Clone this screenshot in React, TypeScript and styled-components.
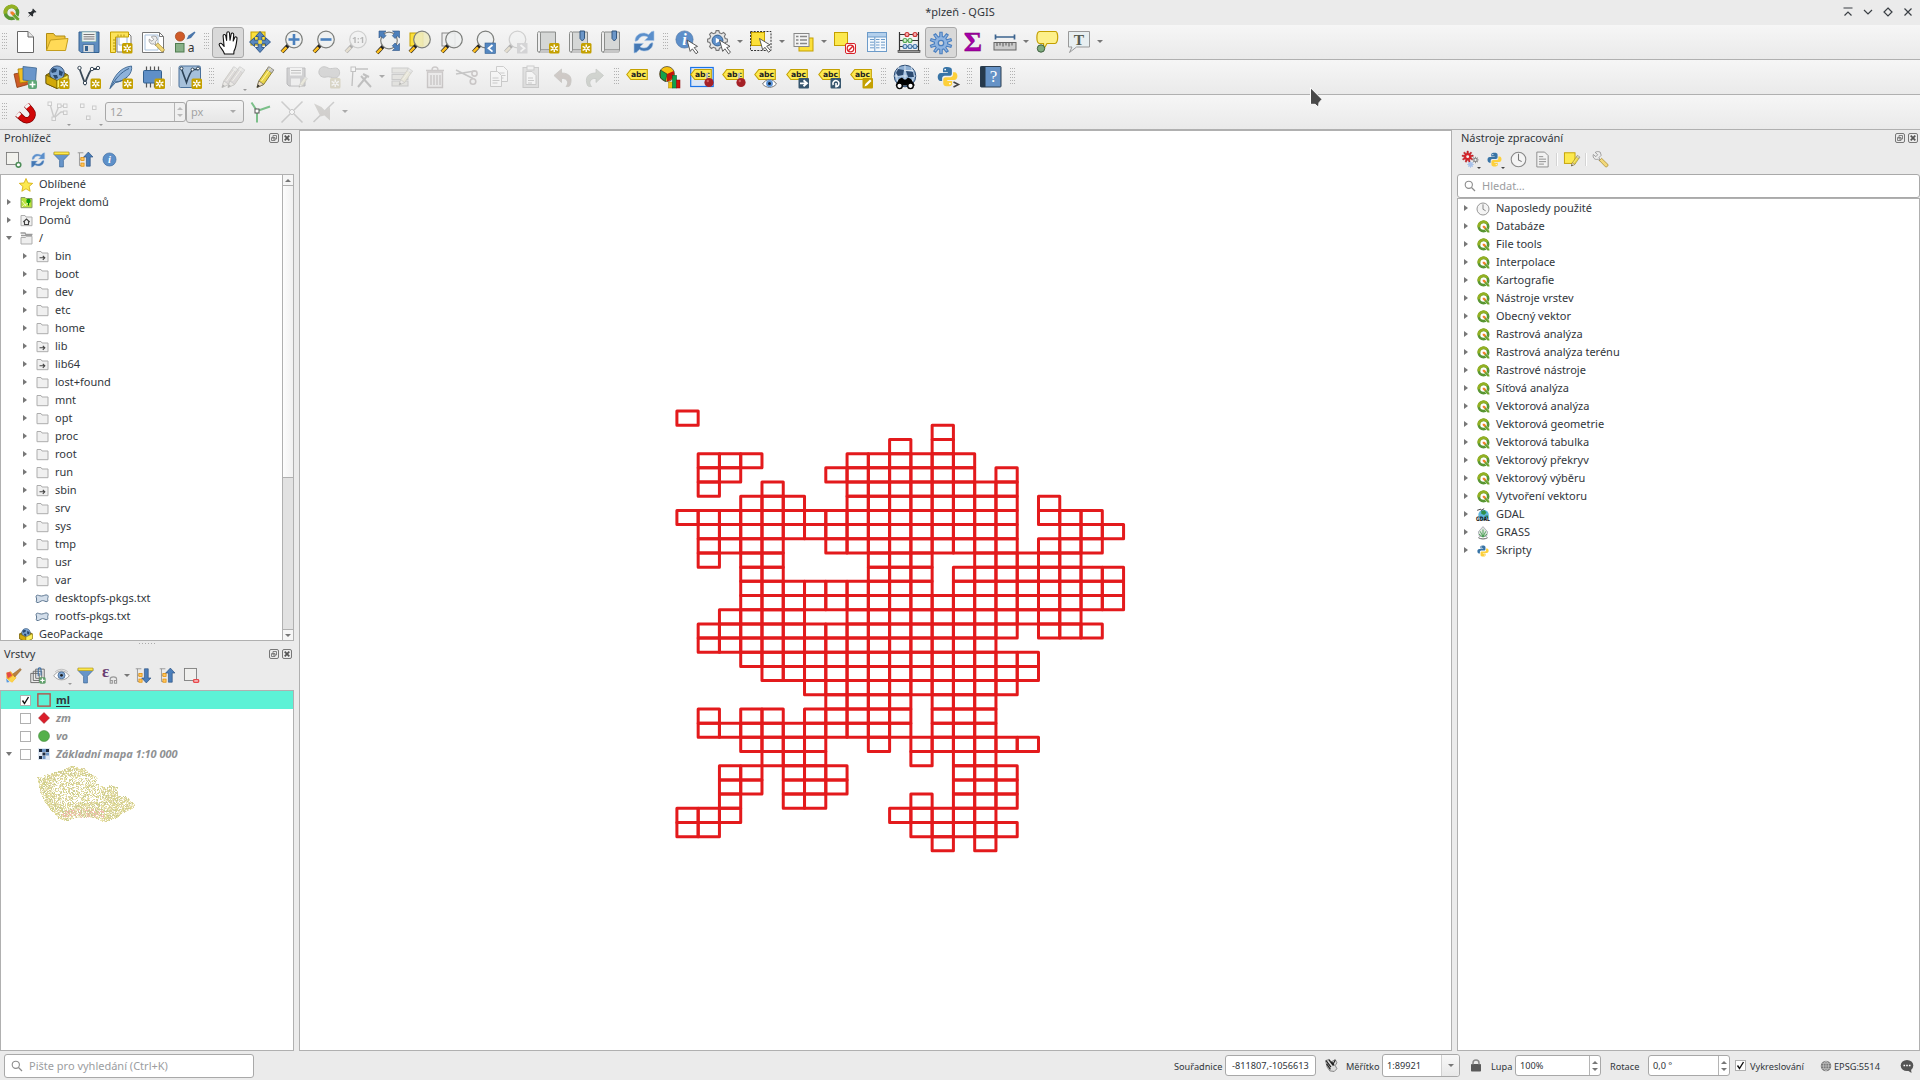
import React from "react";
import styled, { createGlobalStyle, css } from "styled-components";

/* ---------- theme values ---------- */
const bg = "#ebebeb";
const line = "#b0b0b0";
const ink = "#31363b";
const font = '"Noto Sans", "DejaVu Sans", sans-serif';

const GlobalStyle = createGlobalStyle`
  html, body { margin: 0; padding: 0; background: ${bg}; }
  body { font-family: ${font}; font-size: 11px; color: ${ink}; overflow: hidden; }
  *, *::before, *::after { box-sizing: border-box; }
  svg { display: block; flex: none; overflow: visible; }
`;

/* ---------- layout ---------- */
const Window = styled.div`
  position: relative;
  width: 1920px;
  height: 1080px;
  display: flex;
  flex-direction: column;
  background: ${bg};
  overflow: hidden;
`;
const TitleBar = styled.header`
  height: 25px;
  display: grid;
  grid-template-columns: 1fr auto 1fr;
  align-items: center;
  line-height: 24px;
`;
const TitleLeft = styled.div`
  display: flex;
  align-items: center;
  gap: 7px;
  padding-left: 3px;
`;
const TitleText = styled.div`
  padding-bottom: 1px;
`;
const TitleRight = styled.div`
  display: flex;
  justify-content: flex-end;
  gap: 8px;
  padding: 0 6px 1px 0;
`;
const Toolbar = styled.div`
  height: 35px;
  display: flex;
  align-items: stretch;
  padding-bottom: 1px;
  background: linear-gradient(#f6f6f6, #eaeaea);
  border-bottom: 1px solid ${line};
`;
const Grip = styled.div<{ $first?: boolean }>`
  flex: none;
  width: ${(p) => (p.$first ? 9 : 11)}px;
  display: flex;
  align-items: center;
  justify-content: center;
  &::after {
    content: "";
    width: 5px;
    height: 17px;
    background-image: radial-gradient(circle at 0.5px 0.5px, #b2b2b2 0.6px, transparent 0.9px);
    background-size: 2px 3px;
  }
`;
const ToolButton = styled.div<{ $pressed?: boolean; $off?: boolean }>`
  position: relative;
  flex: none;
  width: 32px;
  display: flex;
  align-items: center;
  justify-content: center;
  & > svg { opacity: ${(p) => (p.$off ? 0.3 : 1)}; ${(p) => p.$off && "filter: grayscale(0.7);"} }
  ${(p) =>
    p.$pressed &&
    css`
      background: #d9d9d9;
      border: 1px solid #a9a9a9;
      border-radius: 3px;
      margin: 2px 0 0;
    `}
`;
const MenuMark = styled.span<{ $color?: string }>`
  position: absolute;
  right: 2px;
  bottom: 2px;
  border: 2px solid transparent;
  border-top-color: ${(p) => p.$color || "#999"};
  border-bottom: 0;
`;
const DropArrow = styled.div<{ $w?: number; $off?: boolean }>`
  flex: none;
  width: ${(p) => p.$w || 10}px;
  display: flex;
  align-items: center;
  justify-content: center;
  &::after {
    content: "";
    border: 3px solid transparent;
    border-top-color: ${(p) => (p.$off ? "#aaa" : "#777")};
    border-bottom: 0;
  }
`;
const Separator = styled.div<{ $w?: number }>`
  flex: none;
  width: ${(p) => p.$w || 5}px;
  align-self: stretch;
  display: flex;
  justify-content: center;
  align-items: center;
  &::after { content: ""; width: 1px; height: 55%; background: #fff; box-shadow: -1px 0 0 #d4d4d4; }
`;
const Field = styled.div<{ $w: number; $h: number; $off?: boolean }>`
  flex: none;
  width: ${(p) => p.$w}px;
  height: ${(p) => p.$h}px;
  display: flex;
  align-items: center;
  background: ${(p) => (p.$off ? "#f0f0f0" : "#fff")};
  color: ${(p) => (p.$off ? "#a3a3a3" : ink)};
  border: 1px solid #a8a8a8;
  border-radius: 3px;
  align-self: center;
`;
const FieldText = styled.span<{ $pl?: number }>`
  flex: 1;
  padding-left: ${(p) => p.$pl ?? 4}px;
  white-space: nowrap;
`;
const Steps = styled.span<{ $off?: boolean }>`
  width: 11px;
  align-self: stretch;
  border-left: 1px solid #b5b5b5;
  display: flex;
  flex-direction: column;
  align-items: center;
  justify-content: center;
  gap: 4px;
  &::before, &::after { content: ""; border: 3px solid transparent; }
  &::before { border-bottom-color: ${(p) => (p.$off ? "#bbb" : "#777")}; border-top: 0; }
  &::after { border-top-color: ${(p) => (p.$off ? "#bbb" : "#777")}; border-bottom: 0; }
`;
const ComboButton = styled(Field)`
  background: linear-gradient(#f4f4f4, #e6e6e6);
`;
const ComboEnd = styled.span`
  width: 18px;
  align-self: stretch;
  display: flex;
  border-left: 1px solid #d0d0d0;
  background: linear-gradient(#f8f8f8, #e8e8e8);
  border-radius: 0 3px 3px 0;
  justify-content: center;
`;

const Main = styled.main`
  height: 921px;
  display: flex;
`;
const LeftColumn = styled.aside`
  width: 299px;
  display: flex;
  flex-direction: column;
  padding-right: 5px;
`;
const RightColumn = styled.aside`
  flex: 1;
  display: flex;
  flex-direction: column;
  padding-left: 5px;
`;
const Canvas = styled.section`
  width: 1153px;
  background: #fff;
  border: 1px solid ${line};
`;
const Dock = styled.section<{ $h?: number }>`
  display: flex;
  flex-direction: column;
  min-height: 0;
  ${(p) => (p.$h ? `height: ${p.$h}px; flex: none;` : "flex: 1;")}
`;
const DockTitle = styled.div`
  height: 17px;
  padding: 0 2px 1px 4px;
  display: flex;
  align-items: center;
  line-height: 16px;
`;
const DockName = styled.span`
  flex: 1;
`;
const DockButtons = styled.span`
  display: flex;
  gap: 3px;
`;
const DockBar = styled.div`
  height: 27px;
  display: flex;
  align-items: center;
  padding: 0 0 2px 1.5px;
`;
const SmallButton = styled.span`
  position: relative;
  width: 24px;
  height: 22px;
  display: flex;
  align-items: center;
  justify-content: center;
`;
const SplitDots = styled.div`
  height: 5px;
  display: flex;
  justify-content: center;
  align-items: center;
  &::after {
    content: "";
    width: 17px;
    height: 1px;
    background: repeating-linear-gradient(90deg, #aaa 0 1px, transparent 1px 3px);
  }
`;
const TreeBox = styled.div`
  flex: 1;
  min-height: 0;
  display: flex;
  background: #fff;
  border: 1px solid ${line};
  overflow: hidden;
`;
const TreeList = styled.div`
  flex: 1;
  overflow: hidden;
`;
const TreeRow = styled.div<{ $depth?: number; $selected?: boolean }>`
  height: 18px;
  display: flex;
  align-items: center;
  padding-left: ${(p) => 2 + (p.$depth || 0) * 16}px;
  line-height: 18px;
  white-space: nowrap;
  background: ${(p) => (p.$selected ? "#5cf2d6" : "transparent")};
`;
const Twisty = styled.span<{ $state?: "open" | "closed" | "none"; $wide?: boolean }>`
  flex: none;
  width: 12px;
  margin-right: ${(p) => (p.$wide ? 5 : 0)}px;
  display: flex;
  justify-content: center;
  &::after {
    content: "";
    ${(p) => p.$state === "closed" && "border: 3px solid transparent; border-left: 4px solid #777; border-right: 0;"}
    ${(p) => p.$state === "open" && "border: 3px solid transparent; border-top: 4px solid #777; border-bottom: 0;"}
  }
`;
const RowIcon = styled.span`
  flex: none;
  width: 14px;
  margin: 0 6px 0 4px;
  padding-top: 1px;
  display: flex;
  justify-content: center;
`;
const Scrollbar = styled.div`
  width: 11px;
  display: flex;
  flex-direction: column;
  background: #e2e2e2;
  border-left: 1px solid ${line};
`;
const ScrollEnd = styled.div<{ $up?: boolean }>`
  height: 11px;
  background: #f6f6f6;
  display: flex;
  align-items: center;
  justify-content: center;
  border-${(p) => (p.$up ? "bottom" : "top")}: 1px solid ${line};
  &::after {
    content: "";
    border: 3px solid transparent;
    border-${(p) => (p.$up ? "bottom" : "top")}-color: #777;
    border-${(p) => (p.$up ? "top" : "bottom")}: 0;
  }
`;
const ScrollThumb = styled.div`
  height: 292px;
  background: linear-gradient(90deg, #fdfdfd, #f1f1f1);
  border-bottom: 1px solid ${line};
  margin-bottom: auto;
`;
const Check = styled.span`
  flex: none;
  width: 11px;
  height: 11px;
  display: flex;
  align-items: center;
  justify-content: center;
  background: #fff;
  border: 1px solid #b0b0b0;
`;
const LayerName = styled.span<{ $active?: boolean }>`
  font-weight: 700;
  letter-spacing: -0.05px;
  ${(p) =>
    p.$active
      ? `text-decoration: underline; text-underline-offset: 2px;`
      : `font-style: italic; color: #8f9193;`}
`;
const LayerSymbol = styled.span`
  flex: none;
  width: 14px;
  margin: 0 5px 0 6px;
  display: flex;
  justify-content: center;
`;
const Thumb = styled.div`
  padding: 1px 0 0 35px;
`;
const SearchBox = styled.div<{ $w?: number }>`
  ${(p) => (p.$w ? `width: ${p.$w}px;` : "")}
  height: 24px;
  flex: none;
  display: flex;
  align-items: center;
  gap: 6px;
  padding: 0 0 ${(p) => (p.$w ? 0 : 1)}px 6px;
  background: #fff;
  color: #9b9d9f;
  font-size: 11px;
  border: 1px solid #a9a9a9;
  border-radius: 3px;
`;
const StatusBar = styled.footer`
  height: 29px;
  display: flex;
  align-items: center;
  padding: 0 6px 0 4px;
  font-size: 9.2px;
`;
const StatusText = styled.span<{ $w: number; $pl?: number }>`
  flex: none;
  width: ${(p) => p.$w}px;
  padding: 1px 0 0 ${(p) => p.$pl || 0}px;
  white-space: nowrap;
`;
const StatusIcon = styled.span<{ $w: number }>`
  flex: none;
  width: ${(p) => p.$w}px;
  display: flex;
  justify-content: center;
`;
const Spacer = styled.span`
  flex: 1;
`;
const Pointer = styled.div`
  position: absolute;
  left: 1309px;
  top: 86px;
`;

/* ---------- drawing helpers ---------- */
type Kids = { children?: React.ReactNode };
const I = ({ children, s = 24 }: Kids & { s?: number }) => (
  <svg width={s} height={s} viewBox="0 0 24 24" fill="none">
    {children}
  </svg>
);

/* golden badge marking the "new ..." actions */
const Badge = ({ x = 13, y = 13 }: { x?: number; y?: number }) => (
  <g transform={`translate(${x} ${y})`}>
    <rect width="10.5" height="10.5" rx="1.5" fill="#c4a000" />
    <path d="M5.25 1.4v7.7M1.6 3.3l7.3 4M8.9 3.3l-7.3 4" stroke="#fff" strokeWidth="1.4" />
    <circle cx="5.25" cy="5.25" r="1" fill="#c4a000" />
  </g>
);
const Lens = ({ cx = 14, cy = 9.5, fill = "#eef0f0" }: { cx?: number; cy?: number; fill?: string }) => (
  <g>
    <path d={`M${cx - 5.5} ${cy + 5.5}L${cx - 12} ${cy + 12.5}`} stroke="#222" strokeWidth="4" />
    <path d={`M${cx - 7.5} ${cy + 7.8}L${cx - 12} ${cy + 12.4}`} stroke="#fcbe1e" strokeWidth="2.6" />
    <circle cx={cx} cy={cy} r="8.3" fill={fill} fillOpacity="0.88" stroke="#7d7f7c" strokeWidth="1.2" />
  </g>
);
const Cursor = ({ x = 0, y = 0 }: { x?: number; y?: number }) => (
  <path
    transform={`translate(${x} ${y})`}
    d="M0 0l3.2 11.4 2.2-2.6 3.6 5 2-1.6-3.8-4.6 3.3-1.2z"
    fill="#fff"
    stroke="#4a4a4a"
    strokeWidth="0.9"
  />
);
const Tag = ({ y = 4.5 }: { y?: number }) => (
  <g>
    <path d={`M.8 ${y + 5}l4-5h16.500v10H4.800z`} fill="#fce94f" stroke="#c4a000" strokeWidth="1.1" />
    <text x="12.5" y={y + 7.7} fontSize="7.6" fontWeight="700" fill="#222" textAnchor="middle" fontFamily="DejaVu Sans, sans-serif">
      abc
    </text>
  </g>
);
const Pin = () => (
  <g>
    <path d="M17 8v8" stroke="#eee" strokeWidth="2.4" />
    <path d="M17 8v8" stroke="#888" strokeWidth="1" />
    <circle cx="19" cy="17.5" r="4.6" fill="#a52026" />
    <circle cx="17.8" cy="16" r="1.2" fill="#cf5a5e" />
  </g>
);
const QLogo = ({ s = 16 }: { s?: number }) => (
  <I s={s}>
    <circle cx="12" cy="12" r="8.6" stroke="#589632" strokeWidth="5" />
    <path d="M3.500 13.500A8.600 8.600 0 0 1 19 7" stroke="#93b023" strokeWidth="5" />
    <path d="M13 13l3.200.2 7 7v3.300h-3.600l-6.400-6.800z" fill="#6ba32d" stroke="#fff" strokeWidth="0.8" />
    <path d="M10.500 10.500h3.500l3 3.200-3.200 3-3.300-3.200z" fill="#f0802a" />
  </I>
);
const Refresh = ({ s = 24 }: { s?: number }) => (
  <I s={s}>
    <path d="M3 11C3 4 11 .8 16.600 4.600L19.600 1.600 22 1v9.600h-9.400l3.400-3.300C12.600 5 8 6 6.600 9.600 5.800 10.800 3.600 11.600 3 11z" fill="#5b8fcb" stroke="#a9c6e6" strokeWidth="0.6" />
    <path d="M21 13c0 7-8 10.200-13.600 6.400L4.400 22.400 2 23v-9.600h9.400l-3.400 3.300c3.400 2.300 8 1.300 9.400-2.300.8-1.200 3-2 3.600-1.400z" fill="#4579b5" stroke="#a9c6e6" strokeWidth="0.6" />
  </I>
);
const Python = ({ s = 24 }: { s?: number }) => (
  <I s={s}>
    <path d="M11.500 1C7 1 6.800 3 6.800 4.200V7h5.500v1H4.500C2 8 .8 10 .8 12.500s1.200 4.500 3 4.500h2v-2.800c0-2 1.500-3 3-3h5.400c1.800 0 2.700-1.200 2.700-2.700V4.200C16.900 2 15 1 11.500 1z" fill="#3874a6" />
    <circle cx="9.300" cy="4" r="1" fill="#fff" />
    <path d="M12.500 23c4.500 0 4.700-2 4.700-3.200V17h-5.500v-1h7.800c2.500 0 3.700-2 3.700-4.500S22 7 20.200 7h-2v2.800c0 2-1.500 3-3 3H9.800c-1.800 0-2.700 1.200-2.700 2.700v4.300C7.100 22 9 23 12.500 23z" fill="#fdd03b" />
    <circle cx="14.700" cy="20" r="1" fill="#fff" />
  </I>
);
const Funnel = ({ s = 17 }: { s?: number }) => (
  <I s={s}>
    <path d="M1.500 2h21v3l-7.800 8v9.500H9.300V13L1.500 5z" fill="#6795c9" stroke="#3d6797" strokeWidth="1" />
    <path d="M1.500 1.500h21V5h-21z" fill="#fce94f" stroke="#c4a000" strokeWidth="0.9" />
  </I>
);
const InfoDot = ({ s = 15 }: { s?: number }) => (
  <I s={s}>
    <circle cx="12" cy="12" r="10.5" fill="#5d90c9" stroke="#3f6c9f" />
    <text x="12" y="18" fontSize="17" fontStyle="italic" fontWeight="700" textAnchor="middle" fill="#fff" fontFamily="Liberation Serif, serif">
      i
    </text>
  </I>
);
const Clock = ({ s = 17 }: { s?: number }) => (
  <I s={s}>
    <circle cx="12" cy="12" r="10.3" stroke="#888" strokeWidth="1.5" fill="#f4f4f4" />
    <path d="M12 4v8.500l4.500 2.500" stroke="#777" strokeWidth="1.5" />
  </I>
);
const gearPath = (n: number, r1: number, r2: number, c = 12) => {
  const pts: string[] = [];
  for (let i = 0; i < n; i++) {
    const a = (i / n) * Math.PI * 2 - Math.PI / 2;
    const w = Math.PI / n;
    [
      [a - w * 0.62, r1],
      [a - w * 0.34, r2],
      [a + w * 0.34, r2],
      [a + w * 0.62, r1],
    ].forEach(([t, r]) => pts.push(`${(c + Math.cos(t) * r).toFixed(2)} ${(c + Math.sin(t) * r).toFixed(2)}`));
  }
  return `M${pts.join("L")}Z`;
};
const Pencil = ({ fill = "#e8d44a" }: { fill?: string }) => (
  <g>
    <path d="M4 22.500l1.800-6.500L15.500 2l5 3.200-9.800 14.300z" fill={fill} stroke="#7a6a18" strokeWidth="0.8" />
    <path d="M13.800 4.600L15.800 1.600l5 3.300-2 3z" fill="#c9c9c9" stroke="#777" strokeWidth="0.6" />
    <path d="M4 22.500l1.800-6.500 4.900 3.300z" fill="#f2dfc0" stroke="#555" strokeWidth="0.6" />
    <path d="M4 22.500l.8-3 2 1.400z" fill="#222" />
    <path d="M8.500 16L17.500 3.500" stroke="#fff7a8" strokeWidth="1" />
  </g>
);
const Box3d = () => (
  <g>
    <path d="M1 10l11-6 11 6v8.500l-11 5-11-5z" fill="#a88700" stroke="#5e4d00" strokeWidth="0.9" />
    <circle cx="12" cy="8.2" r="7.3" fill="#7ba3d0" stroke="#2c4a70" strokeWidth="0.9" />
    <path d="M8 3l4 1-1 3-4 1-1-2zM14 5l4 2-1 4-3-1zM8 10h4l1 3-3 1z" fill="#28486f" />
    <path d="M1 10l11 5.500v8L1 18.500z" fill="#d1a90a" stroke="#5e4d00" strokeWidth="0.7" />
    <path d="M23 10l-11 5.500v8l11-5z" fill="#fcf05f" stroke="#8a7400" strokeWidth="0.7" />
  </g>
);
const ArrowV = ({ up }: { up?: boolean }) => (
  <g transform={up ? undefined : "translate(0 24) scale(1 -1)"}>
    <path d="M16 1.500l6.500 7h-3.800v13h-5.400v-13H9.500z" fill="#4a7ebb" stroke="#2a4f7c" strokeWidth="0.9" />
  </g>
);
const TreeExpand = ({ up }: { up?: boolean }) => (
  <I s={17}>
    <path d="M1 2.500h8M3.500 2.500v18H7M3.500 11.500H7" stroke="#888" strokeWidth="1.1" />
    <rect x="5.5" y="9" width="4.500" height="4.500" fill="#ffc65c" stroke="#e08a00" />
    <rect x="5.5" y="17" width="4.500" height="4.500" fill="#ffc65c" stroke="#e08a00" />
    <ArrowV up={up} />
  </I>
);
const Wrench = () => (
  <g>
    <path d="M10 9l3-3-1.500-4.500C9 .5 6.500.6 4.500 2L8 5.200 5.500 8 1.800 5C1 7.500 2 10 4 11.300c1.500.9 3.200.7 4.300.2l3 3z" fill="#ececec" stroke="#777" strokeWidth="0.9" />
    <path d="M10.500 13.500l3-3.200 9 8.700c.6 2-1.400 4-3.400 3.400z" fill="#f2d87a" stroke="#9b7d1c" strokeWidth="0.9" />
  </g>
);
const PageLines = ({ x = 0, y = 0, w = 12, h = 16 }) => (
  <g transform={`translate(${x} ${y})`}>
    <path d={`M.5.5h${w - 4}l4 4v${h - 4}h-${w}z`} fill="#fff" stroke="#777" />
    <path d={`M2.500 7h${w - 5}M2.500 9.500h${w - 4}M2.500 12h${w - 6}`} stroke="#777" />
  </g>
);
const Scroll = () => (
  <g>
    <path d="M4.500 2h15v18h-15z" fill="#d5d7d6" stroke="#8a8c8a" />
    <path d="M1.500 3.500C1.500 1 4.500 1 4.500 3.500V21c0 1.500-3 1.500-3 0z" fill="#efefef" stroke="#8a8c8a" />
    <path d="M3 22h15.500c1 0 1-2 1-2h-15c0 1-.5 2-1.500 2z" fill="#efefef" stroke="#8a8c8a" strokeWidth="0.8" />
  </g>
);
const Ribbon = ({ x = 12 }) => <path d={`M${x} 1h4.500v7.500l-2.200 2.500-2.300-2.500z`} fill="#6b96c8" stroke="#33577f" />;
const Blue = ({ children }: Kids) => (
  <g>
    <rect x="12.500" y="13" width="10.500" height="10.500" rx="1" fill="#37566e" />
    {children}
  </g>
);

/* ---------- toolbar icons ---------- */
const icons: Record<string, React.ReactNode> = {
  newDoc: <I><path d="M4.500 1.500H15L20.500 7v15.500h-16z" fill="#fff" stroke="#666" /><path d="M15 1.500V7h5.500" fill="#e8e8e8" stroke="#666" /></I>,
  open: <I><path d="M1.500 20.500v-17h7l2 2.500H20v3" fill="#f0c53a" stroke="#b08c14" /><path d="M1.500 20.500l4-10.500L23 8.500l-2.500 12z" fill="#ffda57" stroke="#c49e1e" /></I>,
  save: <I><path d="M2 2h20v20.500H4l-2-2z" fill="#5f8dc0" stroke="#34618f" /><path d="M5 2h14v9.500H5z" fill="#f2f2f2" stroke="#8ba" strokeWidth=".6" /><path d="M6.500 4.500h11M6.500 6.800h11M6.500 9h11" stroke="#777" /><path d="M6 14.500h11v8H6z" fill="#d9dcdf" stroke="#34618f" strokeWidth=".7" /><rect x="8" y="16" width="3" height="5" fill="#34618f" /></I>,
  layout: <I><path d="M8 2.500h10.500L22 6v16H8z" fill="#fff" stroke="#777" /><path d="M10 5h8v10h-8z" stroke="#9bb8d8" /><path d="M1.500 2h18v5h-13v15.500h-5z" fill="#fce35a" stroke="#c4a000" /><path d="M4 10h2.500M4 13h2.500M4 16h2.500M4 19h2.500M9 4.500v2M12 4.500v2M15 4.500v2" stroke="#9a7d00" strokeWidth=".8" /><Badge /></I>,
  layoutMgr: <I><path d="M1.500 2.500h17l4 4v16h-21z" fill="#fff" stroke="#777" /><path d="M4 5h13v15H4z" stroke="#a9c2de" /><path d="M18.500 2.500v4h4" stroke="#777" /><g transform="translate(7 5.500) scale(.72)"><Wrench /></g></I>,
  style: <I><circle cx="7" cy="6.500" r="4.600" fill="#cf5b28" stroke="#9c3d12" strokeWidth=".7" /><path d="M13.500 9.500l2-4 6-4 1 1-4.500 5.500z" fill="#4a76aa" /><rect x="2.500" y="13.500" width="8.500" height="8.500" fill="#88b088" stroke="#4f7d4f" /><text x="18" y="21.500" fontSize="12" textAnchor="middle" fill="#333" fontFamily="Noto Sans, sans-serif">a</text></I>,
  hand: <I><path d="M8.500 23C7.500 19 3.500 16 3.100 13.500c.2-1.700 2.200-1.600 3.100-.3L8.100 15.500 7.100 5c0-1.800 2.300-2 2.700-.2l.8 4.700L10.800 2c.2-1.700 2.500-1.700 2.700 0l.5 7.300L15.200 3c.4-1.500 2.500-1.200 2.500.5l-.5 6.500 1.500-3.500c.7-1.300 2.500-.6 2.300.9-.5 4-.8 9.100-3 12.600l-.2 3z" fill="#fff" stroke="#111" strokeWidth="1.1" strokeLinejoin="round" /></I>,
  pan: <I><rect x="3" y="2" width="14" height="13" fill="#fce03a" stroke="#c4a000" /><path d="M12 1.500l4.500 5h-2.700v3.700h3.700V7.500l5 4.500-5 4.500v-2.700h-3.700v3.700h2.700l-4.500 5-4.500-5h2.700v-3.700H6.500v2.700l-5-4.500 5-4.500v2.700h3.700V6.500H7.500z" fill="#5787c0" stroke="#2c5283" strokeWidth=".9" /><rect x="10.300" y="10.200" width="3.600" height="3.600" fill="#fce03a" /></I>,
  zoomIn: <I><Lens /><path d="M14 4v11M8.500 9.500h11" stroke="#4a80bd" strokeWidth="2.600" /></I>,
  zoomOut: <I><Lens /><path d="M8.500 9.500h11" stroke="#4a80bd" strokeWidth="2.600" /></I>,
  zoomNative: <I><Lens /><text x="14.300" y="13" fontSize="9" fontWeight="700" textAnchor="middle" fill="#333" fontFamily="Noto Sans, sans-serif">1:1</text></I>,
  zoomFull: <I><Lens cx={13} cy={10.5} /><path d="M3 1h7L7.500 3.200 10 5.700 7.200 8.500 4.800 5.900 3 8zM23.500 1h-7l2.300 2.200-2.500 2.500 2.800 2.800 2.200-2.600L23.500 8zM23.500 20.500h-7l2.300-2.200-2.500-2.500 2.800-2.800 2.200 2.600 2.200-2.200z" fill="#4d80bb" stroke="#2c5283" strokeWidth=".6" /></I>,
  zoomSel: <I><rect x="2" y="3" width="13" height="13" fill="#fce03a" stroke="#c4a000" /><Lens fill="#eeeac0" /></I>,
  zoomLayer: <I><rect x="2" y="3" width="13" height="13" fill="#eee" stroke="#888" /><Lens /></I>,
  zoomLast: <I><Lens cx={13.5} /><rect x="13" y="13" width="10.500" height="10.500" fill="#5487c0" stroke="#33608f" strokeWidth=".6" /><path d="M20.500 15l-4 3.300 4 3.300" stroke="#fff" strokeWidth="1.800" /></I>,
  zoomNext: <I><Lens cx={13.5} /><rect x="13" y="13" width="10.500" height="10.500" fill="#99a" /><path d="M16.500 15l4 3.300-4 3.300" stroke="#fff" strokeWidth="1.800" /></I>,
  view3d: <I><Scroll /><Badge /></I>,
  bookmarkNew: <I><Scroll /><Ribbon /><Badge /></I>,
  bookmark: <I><Scroll /><Ribbon /></I>,
  refresh: <Refresh />,
  identify: <I><circle cx="9.500" cy="9.500" r="8.600" fill="#5d8fca" stroke="#3f6c9f" strokeWidth=".6" /><text x="9.500" y="15" fontSize="16" fontStyle="italic" fontWeight="700" textAnchor="middle" fill="#fff" fontFamily="Liberation Serif, serif">i</text><Cursor x={12} y={10} /></I>,
  action: <I><path d={gearPath(8, 8, 10, 10.5)} fill="#e6e6e6" stroke="#777" strokeWidth="1.100" /><circle cx="10.500" cy="10.500" r="5.400" fill="#5d8fca" stroke="#35618f" /><path d="M8.800 7.800l5 2.700-5 2.700z" fill="#fff" /><Cursor x={12.5} y={10} /></I>,
  select: <I><rect x="1.500" y="1.500" width="20.500" height="19" stroke="#333" strokeDasharray="2 1.200" /><rect x="2.500" y="2.500" width="13" height="13" fill="#fce03a" stroke="#c4a000" /><Cursor x={10.5} y={8.5} /></I>,
  selForm: <I><rect x="8" y="8" width="14" height="13" fill="#fce03a" stroke="#c4a000" /><rect x="3" y="3.500" width="15" height="13" fill="#f4f4f4" stroke="#888" /><path d="M5 6.500h2.500M9 6.500h7M5 10h2.500M9 10h7M5 13.500h2.500M9 13.500h7" stroke="#888" strokeWidth="1.400" /></I>,
  deselect: <I><rect x="1.500" y="2.500" width="13" height="13" fill="#fce94f" stroke="#c4a000" /><rect x="12.500" y="13.500" width="10" height="10" rx="1.500" fill="#fff" stroke="#d8232a" /><circle cx="17.500" cy="18.500" r="3.300" stroke="#d8232a" strokeWidth="1.300" /><path d="M15.300 20.800l4.500-4.600" stroke="#d8232a" strokeWidth="1.400" /></I>,
  table: <I><rect x="2.500" y="2.500" width="19" height="19" fill="#f5f9fd" stroke="#6c9bc9" /><path d="M2.500 2.500h19V7h-19z" fill="#b4d0ec" stroke="#6c9bc9" /><path d="M5 9.500h4M11 9.500h3.500M16 9.500h4M5 12.200h4M11 12.200h3.500M16 12.200h4M5 15h4M11 15h3.500M16 15h4M5 17.800h4M11 17.800h3.500M16 17.800h4M9.800 7v14" stroke="#6c9bc9" /></I>,
  abacus: <I><path d="M2.500 2v19M21.500 2v19M2.500 4.500h19M2.500 10.500h19M2.500 16.500h19" stroke="#333" strokeWidth="1.200" /><rect x="1" y="20.500" width="22" height="2" fill="#999" stroke="#333" strokeWidth=".6" /><g strokeWidth="1.100"><g fill="#f6b0b0" stroke="#c33"><circle cx="10" cy="4.500" r="2" /><circle cx="18" cy="4.500" r="2" /></g><g fill="#d3f0d0" stroke="#5a5"><circle cx="8" cy="10.500" r="2" /><circle cx="13" cy="10.500" r="2" /></g><g fill="#c5dcf2" stroke="#47a"><circle cx="8" cy="16.500" r="2" /><circle cx="13" cy="16.500" r="2" /><circle cx="18" cy="16.500" r="2" /></g></g></I>,
  gear: <I><path d={gearPath(10, 6.6, 10.8)} fill="#8fb4e0" stroke="#4a7fc0" strokeWidth="1.100" /><circle cx="12" cy="12" r="2.700" fill="#d9d9d9" stroke="#4a7fc0" strokeWidth="1.300" /></I>,
  sigma: <I><text x="12" y="21.300" fontSize="28" fontWeight="700" textAnchor="middle" fill="#a800a8" stroke="#6e006e" strokeWidth=".4" fontFamily="Liberation Serif, serif">Σ</text></I>,
  measure: <I><path d="M2 7h20M2.500 4.500v5M21.500 4.500v5" stroke="#3c648f" strokeWidth="1.700" /><rect x="1" y="12.500" width="22" height="7.500" fill="#ccc" stroke="#666" /><path d="M4 13v3M7 13v2.500M10 13v3.500M13 13v2.500M16 13v3.500M19 13v2.500" stroke="#555" /></I>,
  tips: <I><path d="M4.500 1.500h16c3 0 3 11.500-.5 12h-8l-3.500 6v-6h-4C1 13 1 2 4.500 1.500z" fill="#fdf08a" stroke="#c4a000" strokeWidth="1.200" /><circle cx="6" cy="18.500" r="3.700" fill="#7fac7f" stroke="#406040" /></I>,
  textNote: <I><path d="M1.500 1.500h21V17h-13l-7 5.500L5 17H1.500z" fill="#e8eff1" stroke="#999" /><text x="12" y="14.500" fontSize="15.500" textAnchor="middle" fontWeight="700" fill="#555b50" fontFamily="Liberation Serif, serif">T</text></I>,

  addLayer: <I><path d="M1 9l12-2.500 1.500 13L4 22.500z" fill="#cd5b25" stroke="#8c3a12" strokeWidth=".8" /><path d="M5 4l12-1 1 13-11 2z" fill="#f2bf22" stroke="#a87c00" strokeWidth=".8" /><path d="M10 1.500L23.500 3l-1 13.500L10 15z" fill="#6a96ca" stroke="#3b648f" strokeWidth=".8" /><rect x="15" y="15" width="9" height="9" rx="2" fill="#5fa777" /><path d="M19.500 16.500v6M16.500 19.500h6" stroke="#fff" strokeWidth="1.600" /></I>,
  geopkg: <I><Box3d /><Badge x={14} y={13.5} /></I>,
  shape: <I><path d="M2.500 3.500c1.500 5 4 11 5.500 15 2-6 4-12 7-14.500h6" stroke="#3b4a58" strokeWidth="1.800" /><g fill="#fff" stroke="#3b4a58"><circle cx="2.500" cy="3" r="1.700" /><circle cx="15" cy="4" r="1.700" /><circle cx="21" cy="3" r="1.700" /><circle cx="8" cy="18" r="1.700" /></g><Badge x={13.5} y={13.5} /></I>,
  feather: <I><path d="M1 23.500C4 13 10 2.500 22.500 1 24 8 17 16 6.500 17.500z" fill="#8eb2da" stroke="#3b648f" strokeWidth=".9" /><path d="M1 23.500C6 14 12 7 20 3.500M6 17c5 0 9-2 12-5" stroke="#3b648f" /><Badge x={13.5} y={13.5} /></I>,
  chip: <I><path d="M5.500 1.500v21M9.500 1.500v21M13.500 1.500v21M17.500 1.500v16" stroke="#555" strokeWidth="1.200" /><rect x="2.500" y="5.500" width="18" height="12.500" rx="1" fill="#5f8fc7" stroke="#33608f" /><Badge x={13.5} y={13.5} /></I>,
  virtual: <I><rect x="1" y="1" width="21.500" height="21.500" rx="1.500" fill="#a6c0da" stroke="#4a719b" /><path d="M3.500 3.500c1.500 5 3.500 10 5 14 2-6 4-11 6.500-13h5" stroke="#2d4358" strokeWidth="1.600" /><g fill="#fff" stroke="#2d4358"><circle cx="3.500" cy="3.500" r="1.500" /><circle cx="14.500" cy="4.500" r="1.500" /><circle cx="20" cy="3.500" r="1.500" /></g><Badge x={13.5} y={13.5} /></I>,
  edits: <I><g transform="translate(-3 0)"><Pencil fill="#c0a4a4" /></g><g transform="translate(3 0)"><Pencil fill="#c0a4a4" /></g></I>,
  pencil: <I><Pencil /></I>,
  saveEdits: <I><path d="M2 3h18v18H4l-2-2z" fill="#889" stroke="#445" /><path d="M5 3h12v7.500H5z" fill="#f2f2f2" /><path d="M6 5.500h10M6 8h10" stroke="#555" /><path d="M6 13.500h9v7H6z" fill="#eee" /><g transform="translate(12 11) scale(.5)"><Pencil /></g></I>,
  addPoly: <I><path d="M2 6c1-5 6-5 9-3s9-2 11 2-1 8-4 8-6-2-9-1S1 11 2 6z" fill="#999" stroke="#666" /><Badge /></I>,
  vertex: <I><path d="M4 4L3 21M5 4h14" stroke="#555" strokeWidth="1.300" /><rect x="2" y="2" width="4.500" height="4.500" fill="#fff" stroke="#555" /><path d="M9 22l9-11M12 11l10 11M14 9l6 3" stroke="#555" strokeWidth="2" /></I>,
  multiEdit: <I><rect x="1" y="3" width="16" height="5" fill="#cdc9a8" stroke="#777" /><rect x="1" y="9.500" width="16" height="5" fill="#cdc9a8" stroke="#777" /><rect x="1" y="16" width="16" height="5" fill="#cdc9a8" stroke="#777" /><g transform="translate(5 2) scale(.8)"><Pencil /></g></I>,
  trash: <I><path d="M4.500 7h15v15.500h-15z" fill="#e5dada" stroke="#866" strokeWidth="1.400" /><path d="M3 5.500h18M9 5c0-4 6-4 6 0M8 10v10M11 10v10M14 10v10M17 10v10" stroke="#866" strokeWidth="1.400" /></I>,
  cut: <I><path d="M1 5l17 8.500M1 9l19-3" stroke="#666" strokeWidth="1.600" /><circle cx="19.500" cy="8.500" r="2.600" stroke="#866" strokeWidth="1.600" /><circle cx="18" cy="16.500" r="2.800" stroke="#866" strokeWidth="1.600" /></I>,
  copy: <I><PageLines x={9} y={1} w={11} h={15} /><PageLines x={3} y={6} w={11} h={15} /></I>,
  paste: <I><rect x="4" y="2.500" width="15.500" height="20" fill="#bbb" stroke="#777" /><rect x="8" y="1" width="7" height="4" fill="#eee" stroke="#777" /><PageLines x={6.5} y={6} w={10} h={13} /></I>,
  undo: <I><path d="M3 10.500L10.500 4v4C19 8 22 13 19 20.500c-1.500 1.500-3 1-4 1 3-3 2-8.500-4.500-8v4z" fill="#a66a4a" stroke="#764" strokeWidth=".8" /></I>,
  redo: <I><path d="M20.500 10.500L13 4v4C4.500 8 1.500 13 4.500 20.500c1.500 1.500 3 1 4 1-3-3-2-8.500 4.500-8v4z" fill="#7a9a6a" stroke="#575" strokeWidth=".8" /></I>,
  abc: <I><Tag /></I>,
  diagram: <I><circle cx="9" cy="9" r="7.500" fill="#f5c211" stroke="#222" strokeWidth=".6" /><path d="M9 9L2.500 5v8l5 3.500z" fill="#12a14b" stroke="#222" strokeWidth=".6" /><path d="M9 9l6.800-3c1 4-1 9-6.800 10.500z" fill="#c0140c" /><rect x="10.500" y="17" width="4" height="6" fill="#f5c211" stroke="#a80" strokeWidth=".5" /><rect x="14.500" y="10.500" width="4" height="12.500" fill="#12a14b" stroke="#063" strokeWidth=".6" /><rect x="18.500" y="15" width="3.500" height="8" fill="#d0140c" stroke="#800" strokeWidth=".5" /></I>,
  abcPinFrame: <I><rect x=".7" y="2.500" width="22.500" height="19" fill="#dbe6f4" stroke="#1a73e8" strokeWidth="1.200" /><Tag /><Pin /></I>,
  abcPin: <I><Tag /><Pin /></I>,
  abcEye: <I><Tag /><path d="M8.500 19c4-6 10-6 14 0-4 4.500-10 4.500-14 0z" fill="#fff" stroke="#777" /><circle cx="15.500" cy="18.500" r="3.400" fill="#5b93d6" /><circle cx="15.500" cy="18.500" r="1.500" fill="#123" /></I>,
  abcMove: <I><Tag /><Blue><path d="M14 18.300h6M17.500 15.300l3.500 3-3.500 3" stroke="#fff" strokeWidth="1.800" /></Blue></I>,
  abcRotate: <I><Tag /><Blue><path d="M15.300 20a3 3 0 1 1 3 1.500M18 18v4.500" stroke="#fff" strokeWidth="1.600" /></Blue></I>,
  abcEdit: <I><Tag /><rect x="12.500" y="13" width="10.500" height="10.500" rx="1" fill="#c4a000" /><path d="M14.500 21.500l.8-2.600 4.700-4.500 1.500 1.500-4.500 4.700z" fill="#fff" /></I>,
  metasearch: <I><circle cx="12" cy="11" r="10.800" fill="#8fb0d4" stroke="#2c4a70" /><path d="M1.500 11h21M12 .5v20M3.500 5.500h17M6 2c-3 6-3 12 0 17M18 2c3 6 3 12 0 17" stroke="#dfe9f3" strokeWidth=".9" /><path d="M5 4l6 1-1 5-5 1-2-3zM13 6l7 1 1 5h-6z" fill="#2c4a70" /><path d="M9 12.500l2 2h2l2-2 3 1.500 4 6.500H2.500L6 14z" fill="#000" /><circle cx="6.500" cy="20.800" r="2.800" fill="#fff" stroke="#000" strokeWidth="1.400" /><circle cx="17.500" cy="20.800" r="2.800" fill="#fff" stroke="#000" strokeWidth="1.400" /></I>,
  pyConsole: <I><g transform="translate(1 1) scale(.88)"><Python s={24} /></g><path d="M17.500 17l5 2.500-5 2.500" stroke="#444" strokeWidth="1.500" /></I>,
  help: <I><rect x="1.500" y="1.500" width="20.500" height="20.500" rx=".8" fill="#6592c6" stroke="#2c3e50" /><path d="M1.500 1.500h5V22h-5z" fill="#26394b" /><text x="14.500" y="17" fontSize="17" textAnchor="middle" fill="#fff" fontFamily="Liberation Serif, serif">?</text></I>,

  magnet: <I><path d="M13.500 5l4.500 5.200c5.200 6.300-3.200 13.300-8.500 8.300L4.500 14" stroke="#7a0000" strokeWidth="6.400" /><path d="M13.500 5l4.500 5.200c5.200 6.300-3.200 13.300-8.500 8.300L4.500 14" stroke="#d10808" strokeWidth="5" /><path d="M13.400 4.900l1.900 2.200M4.400 13.900l2.200 2" stroke="#f4f4f4" strokeWidth="5.200" /></I>,
  snapMode: <I><path d="M5 4l4 14 5-12h6M9 18l7-6h4" stroke="#777" strokeWidth="1.400" /><g fill="#fff" stroke="#777"><rect x="3" y="2" width="3.500" height="3.500" /><rect x="12.500" y="4" width="3.500" height="3.500" /><rect x="18.500" y="4" width="3.500" height="3.500" /><rect x="7" y="17" width="3.500" height="3.500" /><rect x="18.500" y="11" width="3.500" height="3.500" /></g></I>,
  snapType: <I><g fill="#fff" stroke="#777"><rect x="3.500" y="4" width="3.500" height="3.500" /><rect x="15.500" y="6" width="3.500" height="3.500" /><rect x="9.500" y="16" width="3.500" height="3.500" /></g></I>,
  topo: <I><path d="M3.500 2.500L9 11l13-4.500M9 11v11.500" stroke="#7cc08a" strokeWidth="2" /><rect x="7" y="9" width="4" height="4" fill="#fff" stroke="#555" /></I>,
  inter: <I><path d="M1.500 1.500l21 21M22.500 1.500l-21 21" stroke="#777" strokeWidth="1.600" /><path d="M12 9l3 3-3 3-3-3z" fill="#fff" stroke="#777" /></I>,
  trace: <I><path d="M1.500 22L22 2" stroke="#777" strokeWidth="1.500" /><path d="M2 3.500l7.500 3.500 3.500 3.500 5-3.500v13.500l-5.500-5-4 1z" fill="#988870" /></I>,
};

/* ---------- panels' small icons ---------- */
const Folder = ({ link, home }: { link?: boolean; home?: boolean }) => (
  <svg width="13" height="13" viewBox="0 0 13 13" fill="none">
    <path d="M1 1.500h4l1 1.500h6v8.700H1z" fill="#f0f0f0" stroke="#adadad" />
    {link && <path d="M3.500 7.800h5M6.800 5.800l2 2-2 2" stroke="#444" strokeWidth="1.100" />}
    {home && <path d="M3.300 8l3.200-3 3.200 3M4.500 7.500v3h4v-3" stroke="#444" strokeWidth="1.100" />}
  </svg>
);
const OpenFolder = () => (
  <svg width="13" height="13" viewBox="0 0 13 13" fill="none">
    <path d="M.5 1H5l1 1.500h6.500M1 3.500h11" stroke="#9b9b9b" strokeWidth="1.300" />
    <path d="M1 5.500h4.500l1-1.200H12V12H1z" fill="#eee" stroke="#adadad" />
  </svg>
);
const ProjectHome = () => (
  <svg width="13" height="13" viewBox="0 0 13 13" fill="none">
    <path d="M1 1.500h4l1 1h6v9.200H1z" fill="#b9e23c" stroke="#8c9a6a" />
    <path d="M2 11c2-3 5-2 8-6M2 5l4 5" stroke="#eef8c0" strokeWidth="1" />
    <circle cx="8.500" cy="5" r="2.200" fill="#0a9a0a" />
    <path d="M8.500 7v2.500" stroke="#0a6a0a" />
  </svg>
);
const Star = () => (
  <I s={14}>
    <path d="M12 .8l3.300 7.600 8.200.8-6.200 5.400 1.900 8.200-7.200-4.300-7.200 4.300 1.900-8.200L.5 9.200l8.200-.8z" fill="#fce94f" stroke="#d0a800" strokeWidth="1.300" />
  </I>
);
const PolyFile = () => (
  <svg width="14" height="10" viewBox="0 0 14 10" fill="none">
    <path d="M1.500 1.500c1.500-1 2.500.5 5 .5s4-1.800 6-.8c1.300.8.5 2 .2 3.300-.2 1.300.8 2.500-.4 3-1.800.6-2.800-1-4.800-.9S4 9.200 1.800 8.500C.6 8 1.800 6.500 1.600 5S.6 2.300 1.500 1.500z" fill="#d3deea" stroke="#5b7590" />
  </svg>
);
const DockGlyphs = () => (
  <DockButtons>
    <svg width="10" height="10" viewBox="0 0 10 10" fill="none">
      <rect x=".5" y=".5" width="9" height="9" rx="1.500" stroke="#777" />
      <path d="M4 2.500h3.500V6H4zM2.500 4.500H6v3H2.500z" stroke="#777" strokeWidth=".9" />
    </svg>
    <svg width="10" height="10" viewBox="0 0 10 10" fill="none">
      <rect x=".5" y=".5" width="9" height="9" rx="1.500" stroke="#777" />
      <path d="M2.700 2.700l4.600 4.600M7.300 2.700L2.700 7.300" stroke="#555" strokeWidth="1.700" />
    </svg>
  </DockButtons>
);
const Magnifier = () => (
  <svg width="12" height="12" viewBox="0 0 12 12" fill="none">
    <circle cx="4.800" cy="4.800" r="3.600" stroke="#8c8c8c" strokeWidth="1.100" />
    <path d="M7.500 7.500l3.500 3.500" stroke="#8c8c8c" strokeWidth="1.300" />
  </svg>
);
const Tick = () => (
  <svg width="9" height="9" viewBox="0 0 9 9" fill="none">
    <path d="M1.500 4.500l2 3L7.500 1" stroke="#111" strokeWidth="1.400" />
  </svg>
);
const EyeIcon = () => (
  <I s={17}>
    <path d="M1 12.500c6-9 16-9 22 0-6 7.500-16 7.500-22 0z" fill="#fff" stroke="#999" strokeWidth="1.300" />
    <circle cx="12" cy="11.800" r="5" fill="#7fa6d2" stroke="#3e618a" />
    <circle cx="12" cy="11.800" r="2" fill="#222" />
    <path d="M3 7c5-5 13-5 18 0" stroke="#aaa" />
  </I>
);
const Gdal = () => (
  <I s={14}>
    <circle cx="13" cy="12" r="9" fill="#5fb6dd" />
    <path d="M9 5l6-1 3 4-4 4-5-2zM16 13h5l-2 4z" fill="#2f8f4a" />
    <path d="M2 4l6-2 1 2 5-3" stroke="#333" strokeWidth="1.500" />
    <text x="12" y="23" fontSize="10.500" fontWeight="700" textAnchor="middle" fill="#111" textLength="24" lengthAdjust="spacingAndGlyphs" fontFamily="DejaVu Sans, sans-serif">GDAL</text>
  </I>
);
const Grass = () => (
  <I s={14}>
    <path d="M12 1l8 9-2 8H6l-2-8z" fill="#dfe6df" stroke="#889" />
    <path d="M12 19V6M12 18L7 9M12 18l5-9M12 19l-7-5M12 19l7-5" stroke="#3f9a4a" strokeWidth="1.500" />
    <path d="M4 20c5 3 11 3 16 0" stroke="#555" strokeWidth="1.600" />
  </I>
);

/* ---------- map grid ---------- */
/* Occupied columns for each row, as inclusive [from, to] spans. */
const gridRows: number[][][] = [
  [[0, 0]],
  [[12, 12]],
  [[10, 10], [12, 12]],
  [[1, 3], [8, 13]],
  [[1, 2], [7, 13], [15, 15]],
  [[1, 1], [4, 4], [8, 15]],
  [[3, 5], [8, 15], [17, 17]],
  [[0, 15], [17, 19]],
  [[1, 15], [18, 20]],
  [[1, 4], [7, 15], [17, 19]],
  [[1, 1], [3, 4], [9, 11], [14, 18]],
  [[3, 4], [9, 11], [13, 20]],
  [[3, 11], [13, 20]],
  [[3, 20]],
  [[2, 5], [8, 18]],
  [[1, 15], [17, 19]],
  [[1, 14]],
  [[3, 16]],
  [[4, 16]],
  [[6, 15]],
  [[7, 10], [12, 14]],
  [[1, 1], [3, 4], [6, 10], [12, 14]],
  [[1, 10], [12, 14]],
  [[3, 6], [9, 9], [11, 16]],
  [[4, 6], [11, 11], [13, 14]],
  [[2, 3], [5, 7], [13, 15]],
  [[2, 3], [5, 7], [13, 15]],
  [[2, 2], [5, 6], [11, 11], [13, 15]],
  [[0, 2], [10, 14]],
  [[0, 1], [11, 15]],
  [[12, 12], [14, 14]],
];
const CELL_W = 21.27;
const CELL_H = 14.185;

const MapGrid = () => (
  <svg width="1151" height="919" viewBox="300 131 1151 919" fill="none">
    <g stroke="#e31a1c" strokeWidth="3" strokeLinejoin="round">
      {gridRows.flatMap((spans, r) =>
        spans.flatMap(([a, b]) =>
          Array.from({ length: b - a + 1 }, (_, i) => (
            <rect key={`${r}-${a + i}`} x={676.9 + (a + i) * CELL_W} y={411.1 + r * CELL_H} width={CELL_W} height={CELL_H} />
          ))
        )
      )}
    </g>
  </svg>
);

/* ---------- raster layer thumbnail ---------- */
const outline = [
  [1, 13], [14, 9], [26, 6], [36, 1], [44, 4], [48, 3], [52, 8], [62, 13], [60, 18], [70, 24], [73, 20], [82, 23], [82, 31],
  [90, 32], [99, 40], [97, 44], [86, 49], [80, 54], [68, 58], [58, 53], [48, 54], [40, 53], [30, 57], [22, 54], [14, 45], [8, 37], [4, 28],
];
const inside = (x: number, y: number) => {
  let hit = false;
  for (let i = 0, j = outline.length - 1; i < outline.length; j = i++) {
    const [xi, yi] = outline[i];
    const [xj, yj] = outline[j];
    if (yi > y !== yj > y && x < ((xj - xi) * (y - yi)) / (yj - yi) + xi) hit = !hit;
  }
  return hit;
};
const thumbDots = (() => {
  const paths: Record<string, string> = {};
  const tones = ["#e6dfa2", "#d8d48e", "#ece6b8", "#d9cfa0", "#c9cc90", "#f3efd2"];
  let seed = 7;
  const rnd = () => ((seed = (seed * 16807) % 2147483647) / 2147483647);
  for (let y = 0; y < 62; y++)
    for (let x = 0; x < 100; x++) {
      const v = rnd();
      const t = rnd();
      if (!inside(x, y)) continue;
      const core = Math.abs(x - 42) < 24 && Math.abs(y - 25) < 14;
      if (v > (core ? 0.55 : 0.82)) continue;
      const pink = x > 25 && x < 68 && y > 44 && y < 54 && t < 0.3;
      const tone = pink ? "#f2bcae" : tones[Math.floor(t * tones.length)];
      paths[tone] = (paths[tone] || "") + `M${x} ${y}h1v1h-1z`;
    }
  return paths;
})();
const Thumbnail = () => (
  <svg width="100" height="62" viewBox="0 0 100 62">
    {Object.entries(thumbDots).map(([tone, d]) => (
      <path key={tone} d={d} fill={tone} />
    ))}
  </svg>
);

/* ---------- toolbar content ---------- */
type Item = string;
/* "|" grip, ":" separator, "v" drop arrow, "V" disabled drop arrow, "-name" disabled, "+name" pressed, "name." with menu mark */
const rowOne: Item[] = "newDoc open save layout layoutMgr style | +hand pan zoomIn zoomOut -zoomNative zoomFull zoomSel zoomLayer zoomLast -zoomNext view3d bookmarkNew bookmark refresh | identify action v select v selForm v deselect table abacus +gear sigma measure v tips textNote v".split(" ");
const rowTwo: Item[] = "addLayer geopkg shape feather chip : virtual | -edits. pencil -saveEdits -addPoly -vertex V -multiEdit -trash -cut -copy -paste -undo -redo | abc diagram abcPinFrame abcPin abcEye abcMove abcRotate abcEdit | metasearch | pyConsole | help |".split(" ");

const Items = ({ list }: { list: Item[] }) => (
  <>
    {list.map((it, i) => {
      if (it === "|") return <Grip key={i} />;
      if (it === ":") return <Separator key={i} />;
      if (it === "v") return <DropArrow key={i} />;
      if (it === "V") return <DropArrow key={i} $off />;
      const off = it[0] === "-";
      const pressed = it[0] === "+";
      const mark = it.endsWith(".");
      const name = it.replace(/[-+.]/g, "");
      return (
        <ToolButton key={i} $off={off} $pressed={pressed}>
          {icons[name]}
          {mark && <MenuMark />}
        </ToolButton>
      );
    })}
  </>
);

const rootDirs = ["bin", "boot", "dev", "etc", "home", "lib", "lib64", "lost+found", "mnt", "opt", "proc", "root", "run", "sbin", "srv", "sys", "tmp", "usr", "var"];
const linked = new Set(["bin", "lib", "lib64", "sbin"]);

const toolGroups = [
  "Databáze", "File tools", "Interpolace", "Kartografie", "Nástroje vrstev", "Obecný vektor", "Rastrová analýza",
  "Rastrová analýza terénu", "Rastrové nástroje", "Síťová analýza", "Vektorová analýza", "Vektorová geometrie",
  "Vektorová tabulka", "Vektorový překryv", "Vektorový výběru", "Vytvoření vektoru",
];

const TreeItem = ({ icon, label, depth, state = "closed" }: { icon: React.ReactNode; label: string; depth?: number; state?: "open" | "closed" | "none" }) => (
  <TreeRow $depth={depth}>
    <Twisty $state={state} />
    <RowIcon>{icon}</RowIcon>
    {label}
  </TreeRow>
);

const BrowserPanel = () => (
  <Dock $h={511}>
    <DockTitle>
      <DockName>Prohlížeč</DockName>
      <DockGlyphs />
    </DockTitle>
    <DockBar>
      <SmallButton><I s={17}><rect x="2" y="2" width="17" height="17" fill="#f2f2ee" stroke="#777" strokeWidth="1.200" /><circle cx="19" cy="19.500" r="3.300" fill="#fff" stroke="#4f8f5a" strokeWidth="2.200" /></I></SmallButton>
      <SmallButton><Refresh s={16} /></SmallButton>
      <SmallButton><Funnel /></SmallButton>
      <SmallButton><TreeExpand up /></SmallButton>
      <SmallButton><InfoDot /></SmallButton>
    </DockBar>
    <TreeBox>
      <TreeList>
        <TreeItem icon={<Star />} label="Oblíbené" state="none" />
        <TreeItem icon={<ProjectHome />} label="Projekt domů" />
        <TreeItem icon={<Folder home />} label="Domů" />
        <TreeItem icon={<OpenFolder />} label="/" state="open" />
        {rootDirs.map((d) => (
          <TreeItem key={d} icon={<Folder link={linked.has(d)} />} label={d} depth={1} />
        ))}
        <TreeItem icon={<PolyFile />} label="desktopfs-pkgs.txt" depth={1} state="none" />
        <TreeItem icon={<PolyFile />} label="rootfs-pkgs.txt" depth={1} state="none" />
        <TreeItem icon={<I s={14}><Box3d /></I>} label="GeoPackage" state="none" />
      </TreeList>
      <Scrollbar>
        <ScrollEnd $up />
        <ScrollThumb />
        <ScrollEnd />
      </Scrollbar>
    </TreeBox>
  </Dock>
);

const LayersPanel = () => (
  <Dock>
    <DockTitle>
      <DockName>Vrstvy</DockName>
      <DockGlyphs />
    </DockTitle>
    <DockBar>
      <SmallButton><I s={17}><path d="M2 8l6-2 8 9-6 7-8-6z" fill="#f5a623" /><path d="M2 8l5-1 3 5-6 4z" fill="#e24b4b" /><path d="M4 18l6 4 6-7-4-3z" fill="#fbd34a" /><path d="M1.500 16l5 5-4 1z" fill="#5a9be0" /><path d="M11 10l3 4 9-10-1.500-2z" fill="#b98240" stroke="#8a5a20" strokeWidth=".7" /></I></SmallButton>
      <SmallButton><I s={17}><path d="M2.500 9h12v13h-12zM6 6h12v13H6zM9.500 3h12v13h-12z" fill="#ececec" stroke="#666" strokeWidth="1.300" /><path d="M13 13V3.500c0-3 4-3 4 0V12" stroke="#3b6ea5" strokeWidth="1.500" /><rect x="14.500" y="14.500" width="9" height="9" rx="2" fill="#5f9f6a" /><path d="M19 16v6M16 19h6" stroke="#fff" strokeWidth="1.700" /></I></SmallButton>
      <SmallButton><EyeIcon /><MenuMark /></SmallButton>
      <SmallButton><Funnel /></SmallButton>
      <SmallButton><I s={17}><text x="6.500" y="13.500" fontSize="24" fontWeight="700" textAnchor="middle" fill="#6a3f72" fontFamily="Liberation Serif, serif">ε</text><path d="M13 23v-6c0-4 9-4 9 0v6M13 19h3v4h-3zM19 19h3v4h-3z" stroke="#999" strokeWidth="1.600" /></I></SmallButton>
      <DropArrow />
      <SmallButton><TreeExpand /></SmallButton>
      <SmallButton><TreeExpand up /></SmallButton>
      <SmallButton><I s={17}><rect x="2" y="2" width="17" height="17" fill="#f0f0ee" stroke="#777" strokeWidth="1.200" /><rect x="14" y="17" width="9" height="5.500" rx="2" fill="#e8484c" /><path d="M16 19.700h5" stroke="#fff" strokeWidth="1.500" /></I></SmallButton>
    </DockBar>
    <TreeBox>
      <TreeList>
        <TreeRow $selected>
          <Twisty $wide />
          <Check><Tick /></Check>
          <LayerSymbol><I s={14}><rect x="1.500" y="1.500" width="21" height="21" stroke="#b5544c" strokeWidth="2.400" /></I></LayerSymbol>
          <LayerName $active>ml</LayerName>
        </TreeRow>
        <TreeRow>
          <Twisty $wide />
          <Check />
          <LayerSymbol><I s={12}><path d="M12 1l11 11-11 11L1 12z" fill="#db1e2a" stroke="#96141c" /></I></LayerSymbol>
          <LayerName>zm</LayerName>
        </TreeRow>
        <TreeRow>
          <Twisty $wide />
          <Check />
          <LayerSymbol><I s={12}><circle cx="12" cy="12" r="11" fill="#54b04a" stroke="#3d8035" /></I></LayerSymbol>
          <LayerName>vo</LayerName>
        </TreeRow>
        <TreeRow>
          <Twisty $state="open" $wide />
          <Check />
          <LayerSymbol>
            <svg width="12" height="12" viewBox="0 0 12 12"><path d="M0 0h12v12H0z" fill="#dfe8f3" /><path d="M1 1h3v3H1zM8 1h3v3H8zM4.500 4.500h3v3h-3zM1 8h3v3H1z" fill="#1d2b40" /><path d="M4 1h4v3H4zM8 4.500h3v3H8zM4.500 8h3v3h-3z" fill="#6d94c4" /></svg>
          </LayerSymbol>
          <LayerName>Základní mapa 1:10 000</LayerName>
        </TreeRow>
        <Thumb><Thumbnail /></Thumb>
      </TreeList>
    </TreeBox>
  </Dock>
);

const ProcessingPanel = () => (
  <Dock>
    <DockTitle>
      <DockName>Nástroje zpracování</DockName>
      <DockGlyphs />
    </DockTitle>
    <DockBar>
      <SmallButton><I s={17}><path d={gearPath(9, 5, 8, 8)} fill="#d8232a" stroke="#9c1015" strokeWidth=".6" /><circle cx="8" cy="8" r="2" fill="#f3f3f3" /><g transform="translate(14 7.500) scale(.42)"><path d={gearPath(8, 7, 11)} fill="#888" /><circle cx="12" cy="12" r="3.500" fill="#eee" /></g><g transform="translate(7 14) scale(.42)"><path d={gearPath(8, 8, 11)} fill="#a8c2ea" /></g></I><MenuMark $color="#444" /></SmallButton>
      <SmallButton><Python s={15} /><MenuMark $color="#444" /></SmallButton>
      <SmallButton><Clock /></SmallButton>
      <SmallButton><I s={17}><path d="M4 1.500h11l5 5v16H4z" fill="#f2f2f2" stroke="#888" strokeWidth="1.300" /><path d="M7 8h6M7 11.500h10M7 15h10M7 18.500h7" stroke="#888" strokeWidth="1.300" /></I></SmallButton>
      <Separator />
      <SmallButton><I s={17}><rect x="2" y="2.500" width="15" height="15" fill="#fce94f" stroke="#c4a000" strokeWidth="1.300" /><g transform="translate(9 5) scale(.72)"><Pencil /></g></I></SmallButton>
      <Separator />
      <SmallButton><I s={17}><Wrench /></I></SmallButton>
    </DockBar>
    <SearchBox>
      <Magnifier />
      Hledat…
    </SearchBox>
    <TreeBox>
      <TreeList>
        <TreeItem icon={<Clock s={14} />} label="Naposledy použité" />
        {toolGroups.map((g) => (
          <TreeItem key={g} icon={<QLogo s={13} />} label={g} />
        ))}
        <TreeItem icon={<Gdal />} label="GDAL" />
        <TreeItem icon={<Grass />} label="GRASS" />
        <TreeItem icon={<Python s={12} />} label="Skripty" />
      </TreeList>
    </TreeBox>
  </Dock>
);

export default function App() {
  return (
    <Window>
      <GlobalStyle />
      <TitleBar>
        <TitleLeft>
          <QLogo s={17} />
          <svg width="10" height="10" viewBox="0 0 10 10"><path d="M6 .5l3.500 3.500-1 .5-.8-.2L6 6l.2 2-1 .6L3.500 7 .5 9.500 3 6.500 1 4.800l.8-.9 2 .1 1.800-1.700-.2-1z" fill="#2a2e32" /></svg>
        </TitleLeft>
        <TitleText>*plzeň - QGIS</TitleText>
        <TitleRight>
          {["M1.500 2h9M2.500 9.500L6 6l3.500 3.500", "M2 4l4 4 4-4", "M6 2l4 4-4 4-4-4z", "M2.500 2.500l7 7M9.500 2.500l-7 7"].map((d) => (
            <svg key={d} width="12" height="12" viewBox="0 0 12 12" fill="none"><path d={d} stroke="#3a3f44" strokeWidth="1.200" /></svg>
          ))}
        </TitleRight>
      </TitleBar>

      <Toolbar><Grip $first /><Items list={rowOne} /></Toolbar>
      <Toolbar><Grip $first /><Items list={rowTwo} /></Toolbar>
      <Toolbar>
        <Grip $first />
        <ToolButton>{icons.magnet}</ToolButton>
        <ToolButton $off>{icons.snapMode}<MenuMark /></ToolButton>
        <ToolButton $off>{icons.snapType}<MenuMark /></ToolButton>
        <Field $w={81} $h={20} $off><FieldText>12</FieldText><Steps $off /></Field>
        <ComboButton $w={58} $h={23} $off><FieldText>px</FieldText><DropArrow $w={20} $off /></ComboButton>
        <ToolButton>{icons.topo}</ToolButton>
        <ToolButton $off>{icons.inter}</ToolButton>
        <ToolButton $off>{icons.trace}</ToolButton>
        <DropArrow $off />
      </Toolbar>

      <Main>
        <LeftColumn>
          <BrowserPanel />
          <SplitDots />
          <LayersPanel />
        </LeftColumn>
        <Canvas><MapGrid /></Canvas>
        <RightColumn>
          <ProcessingPanel />
        </RightColumn>
      </Main>

      <StatusBar>
        <SearchBox $w={250}>
          <Magnifier />
          Pište pro vyhledání (Ctrl+K)
        </SearchBox>
        <Spacer />
        <StatusText $w={51}>Souřadnice</StatusText>
        <Field $w={91} $h={21}><FieldText $pl={6}>-811807,-1056613</FieldText></Field>
        <StatusIcon $w={30}>
          <I s={13}><path d="M1 3l6-2 5 4 7-4 3 6-3 5 3 6-5 5-8-1-5-7z" fill="#ddd" stroke="#555" strokeWidth="1.200" /><path d="M2 3l9 12M7 1l8 11M3 9l7 10M12 5l5 7M19 2l-5 9" stroke="#222" strokeWidth="2.200" /></I>
        </StatusIcon>
        <StatusText $w={36}>Měřítko</StatusText>
        <Field $w={78} $h={23}><FieldText>1:89921</FieldText><ComboEnd><DropArrow /></ComboEnd></Field>
        <StatusIcon $w={31}>
          <svg width="12" height="13" viewBox="0 0 12 13" fill="none"><rect x="1" y="5" width="10" height="7.500" rx=".8" fill="#5a5a5a" /><path d="M3 5.500V4c0-4 6-4 6 0v1.500" stroke="#8a8a8a" strokeWidth="1.500" /></svg>
        </StatusIcon>
        <StatusText $w={24}>Lupa</StatusText>
        <Field $w={86} $h={21}><FieldText>100%</FieldText><Steps /></Field>
        <StatusText $w={47} $pl={9}>Rotace</StatusText>
        <Field $w={82} $h={21}><FieldText>0,0 °</FieldText><Steps /></Field>
        <StatusIcon $w={20}><Check><Tick /></Check></StatusIcon>
        <StatusText $w={68}>Vykreslování</StatusText>
        <StatusIcon $w={16}>
          <I s={12}><circle cx="12" cy="12" r="10.500" fill="#777" /><path d="M1.500 12h21M12 1.500v21M3.500 6.500h17M3.500 17.500h17M12 1.500c-7 6-7 15 0 21M12 1.500c7 6 7 15 0 21" stroke="#ddd" strokeWidth="1.100" /></I>
        </StatusIcon>
        <StatusText $w={66}>EPSG:5514</StatusText>
        <svg width="14" height="14" viewBox="0 0 14 14"><ellipse cx="7" cy="6.500" rx="6.300" ry="5.500" fill="#555" /><path d="M7 11l4.500 3-.5-4z" fill="#555" /><path d="M3.500 5.700h1.600v1.600H3.500zM6.200 5.700h1.600v1.600H6.200zM8.900 5.700h1.600v1.600H8.900z" fill="#fff" /></svg>
      </StatusBar>

      <Pointer>
        <svg width="14" height="24" viewBox="0 0 14 24"><path d="M1.500 1.700v16.600h4.700l3.400 3 .4-4.600 3-3.400z" fill="#4a4a4a" stroke="#fff" strokeWidth="1" /></svg>
      </Pointer>
    </Window>
  );
}
